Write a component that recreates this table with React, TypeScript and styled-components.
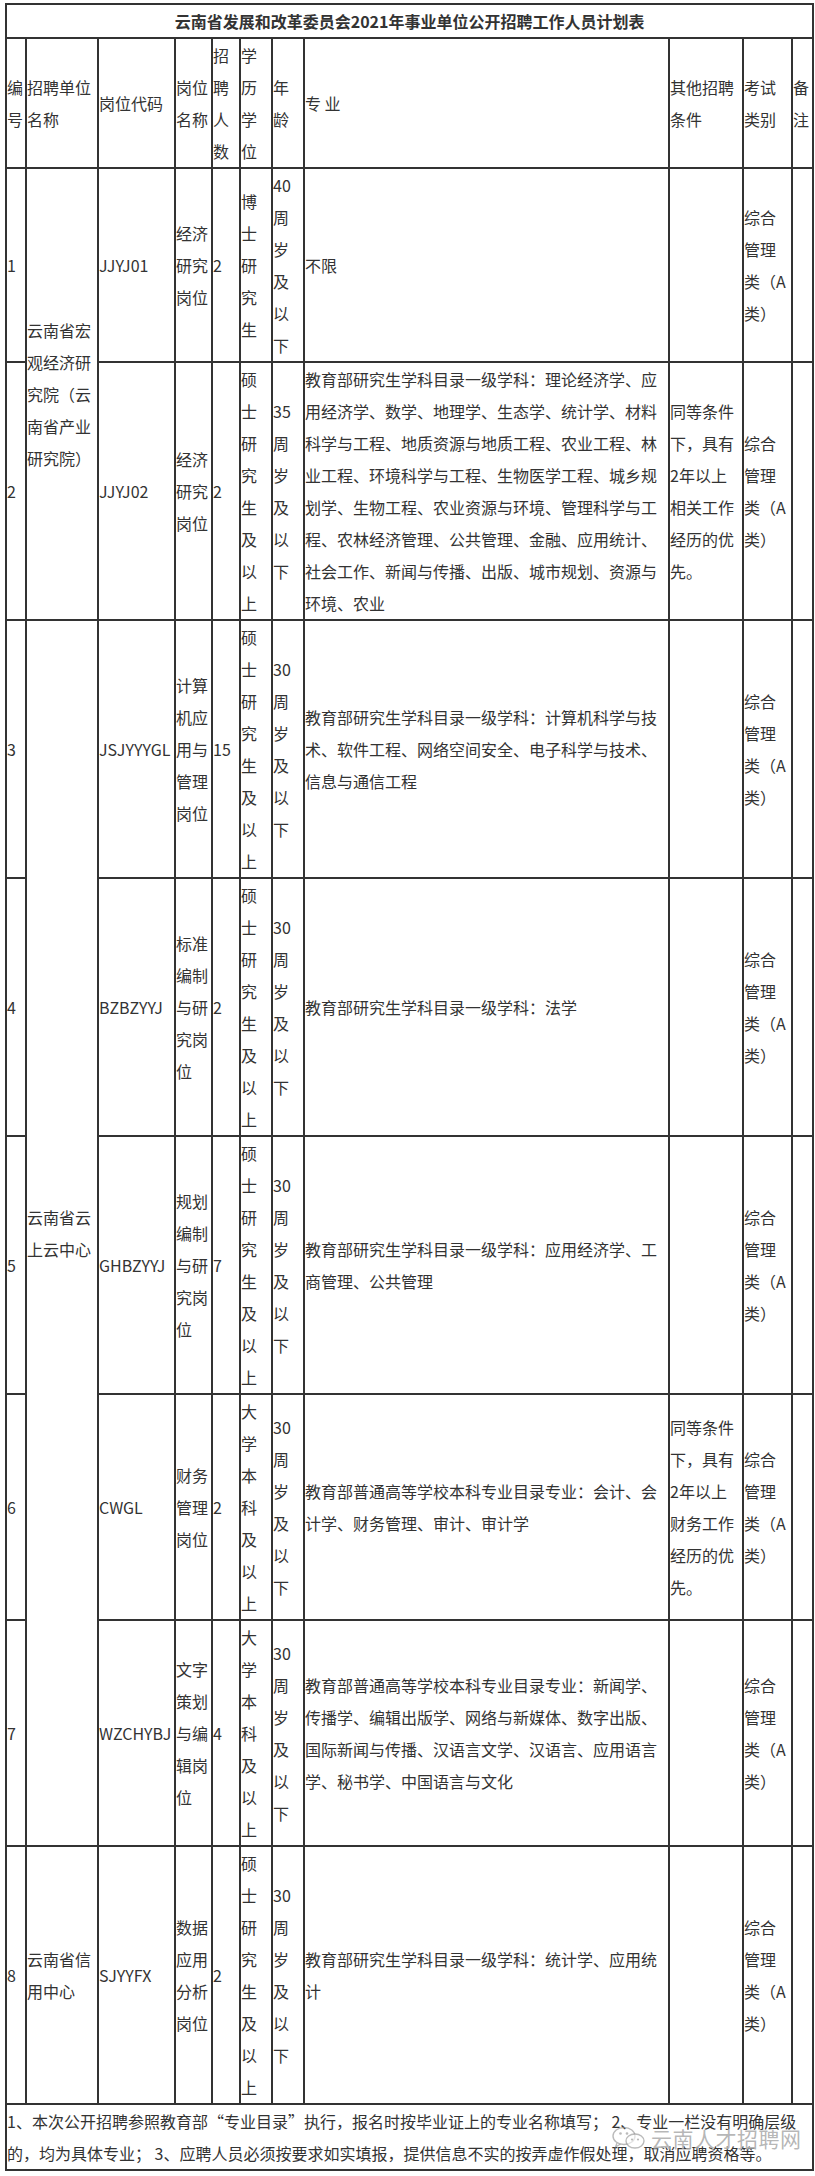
import React from 'react';
import styled, { createGlobalStyle } from 'styled-components';

const GlobalStyle = createGlobalStyle`
  html, body {
    margin: 0;
    padding: 0;
    background: #fff;
  }
  body {
    font-family: "Noto Sans CJK SC", "Microsoft YaHei", sans-serif;
    color: #333;
  }
`;

const Page = styled.div`
  padding: 3px 0 8px 5px;
  width: 815px;
  box-sizing: border-box;
`;

const Table = styled.table`
  width: 807px;
  table-layout: fixed;
  border-collapse: collapse;
  font-size: 16px;
  line-height: 32px;
  color: #333;
`;

const TitleCell = styled.td`
  border: 2px solid #333;
  padding: 0;
  text-align: center;
  font-weight: 700;
  vertical-align: middle;
`;

const Cell = styled.td`
  border: 2px solid #333;
  padding: 0;
  text-align: left;
  vertical-align: middle;
  word-wrap: break-word;
`;

const NoteCell = styled(Cell)`
  position: relative;
  padding-right: 6px;
`;

const Watermark = styled.div`
  position: absolute;
  left: 604px;
  top: 21px;
  display: flex;
  align-items: center;
  gap: 4px;
  pointer-events: none;
  font-size: 21px;
  line-height: 24px;
  letter-spacing: 0.5px;
  color: rgba(120, 120, 120, 0.55);
  text-shadow: 0 0 1px rgba(255, 255, 255, 0.9);
`;

const WeChatMark = () => (
  <svg width="36" height="24" viewBox="0 0 36 24" fill="none">
    <ellipse cx="13" cy="10" rx="11" ry="8.5" stroke="rgba(140,140,140,0.6)" strokeWidth="1.4" />
    <path d="M6 17 L4.5 21 L9.5 18" stroke="rgba(140,140,140,0.6)" strokeWidth="1.3" fill="none" />
    <circle cx="9.5" cy="7.5" r="1.3" fill="rgba(140,140,140,0.6)" />
    <circle cx="16" cy="7.5" r="1.3" fill="rgba(140,140,140,0.6)" />
    <ellipse cx="24" cy="15" rx="9" ry="7" fill="#fff" fillOpacity="0.6" stroke="rgba(140,140,140,0.6)" strokeWidth="1.4" />
    <circle cx="21" cy="13.5" r="1.1" fill="rgba(140,140,140,0.6)" />
    <circle cx="27" cy="13.5" r="1.1" fill="rgba(140,140,140,0.6)" />
  </svg>
);

const colWidths = [20, 72, 77, 37, 28, 32, 32, 365, 74, 49, 21];

const headers = ['编号', '招聘单位名称', '岗位代码', '岗位名称', '招聘人数', '学历学位', '年龄', '专 业', '其他招聘条件', '考试类别', '备注'];

type Row = {
  no: string;
  unit?: { text: string; span: number };
  code: string;
  post: string;
  count: string;
  edu: string;
  age: string;
  major: string;
  other: string;
  exam: string;
};

const exam = '综合管理类（A类）';
const cond = (job: string) => `同等条件下，具有2年以上${job}工作经历的优先。`;

const rows: Row[] = [
  {
    no: '1',
    unit: { text: '云南省宏观经济研究院（云南省产业研究院）', span: 2 },
    code: 'JJYJ01',
    post: '经济研究岗位',
    count: '2',
    edu: '博士研究生',
    age: '40周岁及以下',
    major: '不限',
    other: '',
    exam,
  },
  {
    no: '2',
    code: 'JJYJ02',
    post: '经济研究岗位',
    count: '2',
    edu: '硕士研究生及以上',
    age: '35周岁及以下',
    major:
      '教育部研究生学科目录一级学科：理论经济学、应用经济学、数学、地理学、生态学、统计学、材料科学与工程、地质资源与地质工程、农业工程、林业工程、环境科学与工程、生物医学工程、城乡规划学、生物工程、农业资源与环境、管理科学与工程、农林经济管理、公共管理、金融、应用统计、社会工作、新闻与传播、出版、城市规划、资源与环境、农业',
    other: cond('相关'),
    exam,
  },
  {
    no: '3',
    unit: { text: '云南省云上云中心', span: 5 },
    code: 'JSJYYYGL',
    post: '计算机应用与管理岗位',
    count: '15',
    edu: '硕士研究生及以上',
    age: '30周岁及以下',
    major: '教育部研究生学科目录一级学科：计算机科学与技术、软件工程、网络空间安全、电子科学与技术、信息与通信工程',
    other: '',
    exam,
  },
  {
    no: '4',
    code: 'BZBZYYJ',
    post: '标准编制与研究岗位',
    count: '2',
    edu: '硕士研究生及以上',
    age: '30周岁及以下',
    major: '教育部研究生学科目录一级学科：法学',
    other: '',
    exam,
  },
  {
    no: '5',
    code: 'GHBZYYJ',
    post: '规划编制与研究岗位',
    count: '7',
    edu: '硕士研究生及以上',
    age: '30周岁及以下',
    major: '教育部研究生学科目录一级学科：应用经济学、工商管理、公共管理',
    other: '',
    exam,
  },
  {
    no: '6',
    code: 'CWGL',
    post: '财务管理岗位',
    count: '2',
    edu: '大学本科及以上',
    age: '30周岁及以下',
    major: '教育部普通高等学校本科专业目录专业：会计、会计学、财务管理、审计、审计学',
    other: cond('财务'),
    exam,
  },
  {
    no: '7',
    code: 'WZCHYBJ',
    post: '文字策划与编辑岗位',
    count: '4',
    edu: '大学本科及以上',
    age: '30周岁及以下',
    major:
      '教育部普通高等学校本科专业目录专业：新闻学、传播学、编辑出版学、网络与新媒体、数字出版、国际新闻与传播、汉语言文学、汉语言、应用语言学、秘书学、中国语言与文化',
    other: '',
    exam,
  },
  {
    no: '8',
    unit: { text: '云南省信用中心', span: 1 },
    code: 'SJYYFX',
    post: '数据应用分析岗位',
    count: '2',
    edu: '硕士研究生及以上',
    age: '30周岁及以下',
    major: '教育部研究生学科目录一级学科：统计学、应用统计',
    other: '',
    exam,
  },
];

const note =
  '1、本次公开招聘参照教育部“专业目录”执行，报名时按毕业证上的专业名称填写； 2、专业一栏没有明确层级的，均为具体专业； 3、应聘人员必须按要求如实填报，提供信息不实的按弄虚作假处理，取消应聘资格等。';

export default function App() {
  return (
    <>
      <GlobalStyle />
      <Page>
        <Table>
          <colgroup>
            {colWidths.map((w, i) => (
              <col key={i} style={{ width: w }} />
            ))}
          </colgroup>
          <tbody>
            <tr>
              <TitleCell colSpan={11}>云南省发展和改革委员会2021年事业单位公开招聘工作人员计划表</TitleCell>
            </tr>
            <tr>
              {headers.map((h) => (
                <Cell key={h}>{h}</Cell>
              ))}
            </tr>
            {rows.map((r) => (
              <tr key={r.no}>
                <Cell>{r.no}</Cell>
                {r.unit && <Cell rowSpan={r.unit.span}>{r.unit.text}</Cell>}
                <Cell>{r.code}</Cell>
                <Cell>{r.post}</Cell>
                <Cell>{r.count}</Cell>
                <Cell>{r.edu}</Cell>
                <Cell>{r.age}</Cell>
                <Cell>{r.major}</Cell>
                <Cell>{r.other}</Cell>
                <Cell>{r.exam}</Cell>
                <Cell />
              </tr>
            ))}
            <tr>
              <NoteCell colSpan={11}>
                {note}
                <Watermark>
                  <WeChatMark />
                  <span>云南人才招聘网</span>
                </Watermark>
              </NoteCell>
            </tr>
          </tbody>
        </Table>
      </Page>
    </>
  );
}
